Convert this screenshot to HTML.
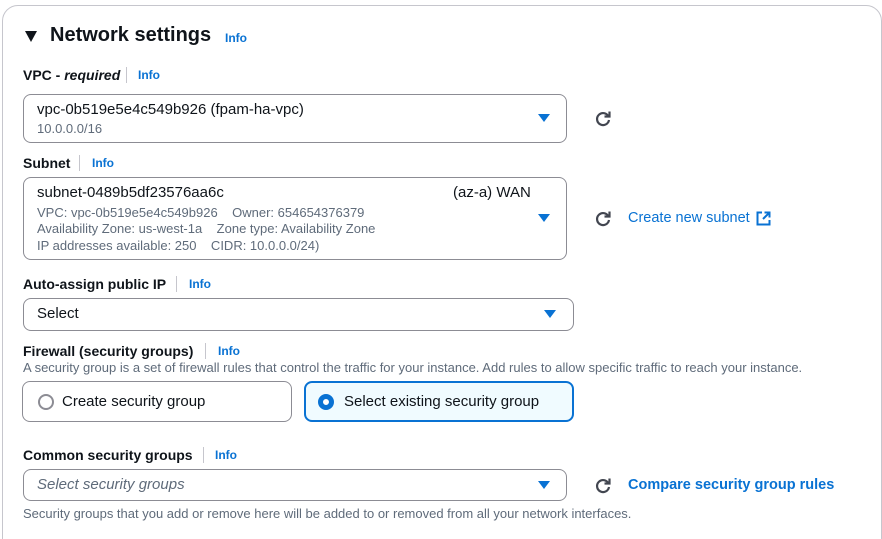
<!DOCTYPE html>
<html><head><meta charset="utf-8"><style>
*{margin:0;padding:0;box-sizing:border-box}
html,body{width:882px;height:539px;overflow:hidden}
body{background:#fff;font-family:"Liberation Sans",sans-serif;color:#0f141a;position:relative}
.card{position:absolute;left:2px;top:5px;width:880px;height:560px;border:1px solid #c6c6cd;border-radius:16px}
.a{position:absolute;white-space:nowrap}
.lbl{font-weight:bold;font-size:14px}
.info{font-weight:bold;font-size:12px;color:#0972d3}
.div{position:absolute;width:1px;height:16px;background:#c6c6cd}
.box{position:absolute;border:1.5px solid #8c8c94;border-radius:8px;background:#fff}
.t14{font-size:15px}
.g{font-size:13px;color:#5f6b7a}
.caret{position:absolute;width:0;height:0;border-left:6px solid transparent;border-right:6px solid transparent;border-top:8px solid #0972d3}
.rf{position:absolute;width:20px;height:20px}
.link{color:#0972d3;font-size:14.5px}
</style></head><body>
<div class="card"></div>
<div class="a" style="left:25px;top:31px;width:0;height:0;border-left:6px solid transparent;border-right:6px solid transparent;border-top:11px solid #0f141a"></div>
<div class="a" style="left:50px;top:24px;font-size:20px;font-weight:bold">Network settings</div>
<div class="a info" style="left:225px;top:31px">Info</div>

<div class="a lbl" style="left:23px;top:67px">VPC - <i>required</i></div>
<div class="div" style="left:126px;top:67px"></div>
<div class="a info" style="left:138px;top:68px">Info</div>
<div class="box" style="left:23px;top:94px;width:544px;height:49px"></div>
<div class="a t14" style="left:37px;top:101px">vpc-0b519e5e4c549b926 (fpam-ha-vpc)</div>
<div class="a g" style="left:37px;top:121px">10.0.0.0/16</div>
<div class="caret" style="left:538px;top:114px"></div>
<svg class="rf" style="left:593px;top:108px" viewBox="0 0 20 20"><path d="M15.5 8.5A6 6 0 1 0 16 12" fill="none" stroke="#424650" stroke-width="2.2"/><path d="M16.5 3.5V8.5H11.5" fill="none" stroke="#424650" stroke-width="2.2"/></svg>

<div class="a lbl" style="left:23px;top:155px">Subnet</div>
<div class="div" style="left:79px;top:155px"></div>
<div class="a info" style="left:92px;top:156px">Info</div>
<div class="box" style="left:23px;top:177px;width:544px;height:83px"></div>
<div class="a t14" style="left:37px;top:184px">subnet-0489b5df23576aa6c</div>
<div class="a t14" style="left:453px;top:184px">(az-a) WAN</div>
<div class="a g" style="left:37px;top:205px">VPC: vpc-0b519e5e4c549b926&nbsp;&nbsp;&nbsp;&nbsp;Owner: 654654376379</div>
<div class="a g" style="left:37px;top:221px">Availability Zone: us-west-1a&nbsp;&nbsp;&nbsp;&nbsp;Zone type: Availability Zone</div>
<div class="a g" style="left:37px;top:238px">IP addresses available: 250&nbsp;&nbsp;&nbsp;&nbsp;CIDR: 10.0.0.0/24)</div>
<div class="caret" style="left:538px;top:214px"></div>
<svg class="rf" style="left:593px;top:208px" viewBox="0 0 20 20"><path d="M15.5 8.5A6 6 0 1 0 16 12" fill="none" stroke="#424650" stroke-width="2.2"/><path d="M16.5 3.5V8.5H11.5" fill="none" stroke="#424650" stroke-width="2.2"/></svg>
<div class="a link" style="left:628px;top:210px">Create new subnet</div>
<svg class="a" style="left:756px;top:211px" width="15" height="15" viewBox="0 0 15 15"><path d="M6 1.5H1.5V13.5H13.5V9M8.5 1.5H13.5V6.5M13.5 1.5L7 8" fill="none" stroke="#0972d3" stroke-width="2"/></svg>

<div class="a lbl" style="left:23px;top:276px">Auto-assign public IP</div>
<div class="div" style="left:176px;top:276px"></div>
<div class="a info" style="left:189px;top:277px">Info</div>
<div class="box" style="left:23px;top:298px;width:551px;height:33px"></div>
<div class="a t14" style="left:37px;top:305px">Select</div>
<div class="caret" style="left:544px;top:310px"></div>

<div class="a lbl" style="left:23px;top:343px">Firewall (security groups)</div>
<div class="div" style="left:205px;top:343px"></div>
<div class="a info" style="left:218px;top:344px">Info</div>
<div class="a g" style="left:23px;top:360px">A security group is a set of firewall rules that control the traffic for your instance. Add rules to allow specific traffic to reach your instance.</div>
<div class="box" style="left:22px;top:381px;width:270px;height:41px"></div>
<div class="a" style="left:38px;top:394px;width:16px;height:16px;border:2px solid #8c8c94;border-radius:50%"></div>
<div class="a t14" style="left:62px;top:393px">Create security group</div>
<div class="box" style="left:304px;top:381px;width:270px;height:41px;border:2px solid #0972d3;background:#f0fbff"></div>
<div class="a" style="left:318px;top:394px;width:16px;height:16px;border:5px solid #0972d3;border-radius:50%;background:#fff"></div>
<div class="a t14" style="left:344px;top:393px">Select existing security group</div>

<div class="a lbl" style="left:23px;top:447px">Common security groups</div>
<div class="div" style="left:203px;top:447px"></div>
<div class="a info" style="left:215px;top:448px">Info</div>
<div class="box" style="left:23px;top:469px;width:544px;height:32px"></div>
<div class="a t14" style="left:37px;top:476px;font-style:italic;color:#5f6b7a">Select security groups</div>
<div class="caret" style="left:538px;top:481px"></div>
<svg class="rf" style="left:593px;top:475px" viewBox="0 0 20 20"><path d="M15.5 8.5A6 6 0 1 0 16 12" fill="none" stroke="#424650" stroke-width="2.2"/><path d="M16.5 3.5V8.5H11.5" fill="none" stroke="#424650" stroke-width="2.2"/></svg>
<div class="a link" style="left:628px;top:477px;font-weight:bold">Compare security group rules</div>
<div class="a g" style="left:23px;top:506px">Security groups that you add or remove here will be added to or removed from all your network interfaces.</div>
</body></html>
